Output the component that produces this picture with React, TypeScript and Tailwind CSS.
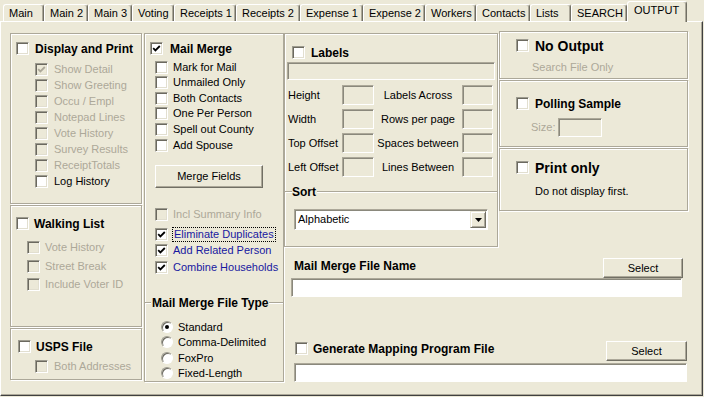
import type { ReactNode } from "react"

const tabs = [
  { label: "Main", w: "w-[41px]" },
  { label: "Main 2", w: "w-[44px]" },
  { label: "Main 3", w: "w-[44px]" },
  { label: "Voting", w: "w-[42px]" },
  { label: "Receipts 1", w: "w-[62px]" },
  { label: "Receipts 2", w: "w-[64px]" },
  { label: "Expense 1", w: "w-[63px]" },
  { label: "Expense 2", w: "w-[62px]" },
  { label: "Workers", w: "w-[51px]" },
  { label: "Contacts", w: "w-[54px]" },
  { label: "Lists", w: "w-[41px]" },
  { label: "SEARCH", w: "w-[56px]" },
]

function Box({ checked, disabled }: { checked?: boolean; disabled?: boolean }) {
  return (
    <span
      className={`flex h-[13px] w-[13px] shrink-0 items-center justify-center border border-t-[#9d9b8f] border-l-[#9d9b8f] border-r-white border-b-white shadow-[inset_1px_1px_0_#6b695f,inset_-1px_-1px_0_#e2dfd0] ${
        disabled ? "bg-[#ece9d8]" : "bg-white"
      }`}
    >
      {checked && (
        <svg width="9" height="9" viewBox="0 0 9 9">
          <path d="M1.2 4.2 L3.4 6.4 L7.8 2" fill="none" stroke={disabled ? "#aca899" : "#000"} strokeWidth="1.8" />
        </svg>
      )}
    </span>
  )
}

function Radio({ on }: { on?: boolean }) {
  return (
    <span className="flex h-[12px] w-[12px] shrink-0 items-center justify-center rounded-full border border-t-[#9d9b8f] border-l-[#9d9b8f] border-r-white border-b-white bg-white shadow-[inset_1px_1px_0_#6b695f]">
      {on && <span className="h-[4px] w-[4px] rounded-full bg-black" />}
    </span>
  )
}

function Field({ className, white }: { className: string; white?: boolean }) {
  return (
    <div
      className={`shrink-0 border border-t-[#aca899] border-l-[#aca899] border-r-white border-b-white shadow-[inset_1px_1px_0_#8a887c] ${
        white ? "bg-white" : "bg-[#ece9d8]"
      } ${className}`}
    />
  )
}

function Button({ children, className }: { children: ReactNode; className: string }) {
  return (
    <div
      className={`flex shrink-0 items-center justify-center border border-t-white border-l-white border-r-[#716f64] border-b-[#716f64] text-[11px] shadow-[inset_-1px_-1px_0_#aca899] ${className}`}
    >
      {children}
    </div>
  )
}

function Panel({ children, className }: { children?: ReactNode; className: string }) {
  return (
    <div className={`flex shrink-0 flex-col border border-[#aca899] shadow-[inset_1px_1px_0_#fff,1px_1px_0_#fff] ${className}`}>
      {children}
    </div>
  )
}

function Row({
  label,
  checked,
  disabled,
  className,
  gap = "ml-[6px]",
  blue,
}: {
  label: string
  checked?: boolean
  disabled?: boolean
  className: string
  gap?: string
  blue?: boolean
}) {
  return (
    <div className={`flex h-[13px] items-center ${className}`}>
      <Box checked={checked} disabled={disabled} />
      <span
        className={`${gap} whitespace-nowrap text-[11px] leading-[13px] ${
          disabled ? "text-[#aca899]" : blue ? "text-[#1818a0]" : "text-black"
        }`}
      >
        {label}
      </span>
    </div>
  )
}

function Etch({ className }: { className: string }) {
  return <div className={`h-[2px] border-t border-b border-t-[#aca899] border-b-white ${className}`} />
}

export default function App() {
  return (
    <div className="flex h-[397px] w-[704px] flex-col overflow-hidden bg-[#ece9d8] font-['Liberation_Sans',Arial,sans-serif] text-black">
      {/* tab strip */}
      <div className="flex h-[21px] shrink-0 items-end pl-[3px]">
        {tabs.map((t) => (
          <div
            key={t.label}
            className={`flex h-[17px] shrink-0 items-center rounded-t-[3px] border-t border-l border-r border-t-white border-l-white border-r-[#716f64] pl-[5px] text-[11px] leading-[13px] shadow-[inset_-1px_0_0_#aca899] ${t.w}`}
          >
            {t.label}
          </div>
        ))}
        <div className="relative top-[1px] z-10 flex h-[21px] w-[60px] shrink-0 items-center rounded-t-[3px] border-t border-l border-r border-t-white border-l-white border-r-[#716f64] bg-[#ece9d8] pb-[3px] pl-[6px] text-[11px] leading-[13px] shadow-[inset_-1px_0_0_#aca899]">
          OUTPUT
        </div>
      </div>

      {/* tab page */}
      <div className="flex h-[375px] w-[703px] shrink-0 items-start border border-t-white border-l-white border-r-[#404040] border-b-[#404040] pl-[9px] pt-[9px] shadow-[inset_-1px_-1px_0_#aca899]">
        {/* column 1 */}
        <div className="mt-[2px] flex w-[132px] shrink-0 flex-col">
          <Panel className="h-[171px]">
            <div className="ml-[5px] mt-[8px] flex h-[13px] items-center">
              <Box />
              <span className="ml-[6px] whitespace-nowrap text-[12px] font-bold leading-[14px]">Display and Print</span>
            </div>
            <Row label="Show Detail" checked disabled className="ml-[24px] mt-[8px]" />
            <Row label="Show Greeting" disabled className="ml-[24px] mt-[3px]" />
            <Row label="Occu / Empl" disabled className="ml-[24px] mt-[3px]" />
            <Row label="Notepad Lines" disabled className="ml-[24px] mt-[3px]" />
            <Row label="Vote History" disabled className="ml-[24px] mt-[3px]" />
            <Row label="Survey Results" disabled className="ml-[24px] mt-[3px]" />
            <Row label="ReceiptTotals" disabled className="ml-[24px] mt-[3px]" />
            <Row label="Log History" className="ml-[24px] mt-[3px]" />
          </Panel>
          <Panel className="mt-[1px] h-[122px]">
            <div className="ml-[5px] mt-[11px] flex h-[13px] items-center">
              <Box />
              <span className="ml-[5px] whitespace-nowrap text-[12px] font-bold leading-[14px]">Walking List</span>
            </div>
            <Row label="Vote History" disabled gap="ml-[5px]" className="ml-[16px] mt-[11px]" />
            <Row label="Street Break" disabled gap="ml-[5px]" className="ml-[16px] mt-[6px]" />
            <Row label="Include Voter ID" disabled gap="ml-[5px]" className="ml-[16px] mt-[5px]" />
          </Panel>
          <Panel className="mt-[1px] h-[52px]">
            <div className="ml-[7px] mt-[11px] flex h-[13px] items-center">
              <Box />
              <span className="ml-[5px] whitespace-nowrap text-[12px] font-bold leading-[14px]">USPS File</span>
            </div>
            <Row label="Both Addresses" disabled className="ml-[24px] mt-[7px]" />
          </Panel>
        </div>

        {/* column 2 */}
        <Panel className="ml-[2px] mt-[2px] h-[349px] w-[140px]">
          <div className="ml-[5px] mt-[8px] flex h-[13px] items-center">
            <Box checked />
            <span className="ml-[7px] whitespace-nowrap text-[12px] font-bold leading-[14px]">Mail Merge</span>
          </div>
          <Row label="Mark for Mail" gap="ml-[5px]" className="ml-[10px] mt-[6px]" />
          <Row label="Unmailed Only" gap="ml-[5px]" className="ml-[10px] mt-[2px]" />
          <Row label="Both Contacts" gap="ml-[5px]" className="ml-[10px] mt-[3px]" />
          <Row label="One Per Person" gap="ml-[5px]" className="ml-[10px] mt-[2px]" />
          <Row label="Spell out County" gap="ml-[5px]" className="ml-[10px] mt-[3px]" />
          <Row label="Add Spouse" gap="ml-[5px]" className="ml-[10px] mt-[3px]" />
          <Button className="ml-[10px] mt-[13px] h-[23px] w-[108px]">Merge Fields</Button>
          <Row label="Incl Summary Info" disabled gap="ml-[5px]" className="ml-[10px] mt-[20px]" />
          <div className="ml-[10px] mt-[7px] flex h-[13px] items-center">
            <Box checked />
            <span className="ml-[4px] whitespace-nowrap border border-dotted border-black px-[1px] text-[11px] leading-[13px] text-[#1818a0]">
              Eliminate Duplicates
            </span>
          </div>
          <Row label="Add Related Person" checked blue gap="ml-[5px]" className="ml-[10px] mt-[3px]" />
          <Row label="Combine Households" checked blue gap="ml-[5px]" className="ml-[10px] mt-[4px]" />
          <div className="mt-[22px] flex h-[14px] items-center">
            <Etch className="w-[6px]" />
            <span className="whitespace-nowrap px-[1px] text-[12px] font-bold leading-[14px]">Mail Merge File Type</span>
            <Etch className="flex-1" />
          </div>
          {[
            { label: "Standard", on: true, mt: "mt-[11px]" },
            { label: "Comma-Delimited", on: false, mt: "mt-[3px]" },
            { label: "FoxPro", on: false, mt: "mt-[4px]" },
            { label: "Fixed-Length", on: false, mt: "mt-[3px]" },
          ].map((r) => (
            <div key={r.label} className={`ml-[16px] flex h-[12px] items-center ${r.mt}`}>
              <Radio on={r.on} />
              <span className="ml-[5px] whitespace-nowrap text-[11px] leading-[13px]">{r.label}</span>
            </div>
          ))}
        </Panel>

        {/* right section */}
        <div className="flex shrink-0 flex-col">
          <div className="flex items-start">
            {/* labels / sort */}
            <Panel className="mt-[2px] h-[214px] w-[214px]">
              <div className="ml-[7px] mt-[12px] flex h-[13px] items-center">
                <Box />
                <span className="ml-[6px] whitespace-nowrap text-[12px] font-bold leading-[14px]">Labels</span>
              </div>
              <Field className="ml-[2px] mt-[3px] h-[18px] w-[208px]" />
              <div className="mt-[5px] flex flex-col gap-[4px]">
                {[
                  ["Height", "Labels Across"],
                  ["Width", "Rows per page"],
                  ["Top Offset", "Spaces between"],
                  ["Left Offset", "Lines Between"],
                ].map(([a, b]) => (
                  <div key={a} className="flex h-[20px] items-center">
                    <span className="ml-[3px] w-[54px] whitespace-nowrap text-[11px] leading-[13px]">{a}</span>
                    <Field className="h-[20px] w-[32px]" />
                    <span className="w-[88px] whitespace-nowrap text-center text-[11px] leading-[13px]">{b}</span>
                    <Field className="h-[20px] w-[31px]" />
                  </div>
                ))}
              </div>
              <div className="mt-[8px] flex h-[14px] items-center">
                <Etch className="w-[7px]" />
                <span className="pr-[1px] text-[12px] font-bold leading-[14px]">Sort</span>
                <Etch className="flex-1" />
              </div>
              <div className="ml-[9px] mt-[10px] flex h-[21px] w-[194px] items-center border border-t-[#aca899] border-l-[#aca899] border-r-white border-b-white bg-white p-[1px] shadow-[inset_1px_1px_0_#8a887c]">
                <span className="flex-1 pl-[2px] text-[11px] leading-[13px]">Alphabetic</span>
                <div className="flex h-[17px] w-[16px] items-center justify-center border border-t-[#ece9d8] border-l-[#ece9d8] border-r-[#716f64] border-b-[#716f64] bg-[#ece9d8] shadow-[inset_1px_1px_0_#fff,inset_-1px_-1px_0_#aca899]">
                  <svg width="7" height="4" viewBox="0 0 7 4">
                    <path d="M0 0 H7 L3.5 4 Z" fill="#000" />
                  </svg>
                </div>
              </div>
            </Panel>

            {/* output options */}
            <div className="ml-[1px] flex w-[189px] shrink-0 flex-col">
              <Panel className="h-[48px]">
                <div className="ml-[16px] mt-[7px] flex h-[13px] items-center">
                  <Box />
                  <span className="ml-[6px] whitespace-nowrap text-[14px] font-bold leading-[14px]">No Output</span>
                </div>
                <span className="ml-[32px] mt-[9px] text-[11px] leading-[13px] text-[#aca899]">Search File Only</span>
              </Panel>
              <Panel className="mt-[1px] h-[67px]">
                <div className="ml-[16px] mt-[16px] flex h-[13px] items-center">
                  <Box />
                  <span className="ml-[6px] whitespace-nowrap text-[12px] font-bold leading-[14px]">Polling Sample</span>
                </div>
                <div className="ml-[31px] mt-[8px] flex items-center">
                  <span className="text-[11px] leading-[13px] text-[#aca899]">Size:</span>
                  <Field className="ml-[3px] h-[19px] w-[44px]" />
                </div>
              </Panel>
              <Panel className="mt-[1px] h-[63px]">
                <div className="ml-[16px] mt-[12px] flex h-[13px] items-center">
                  <Box />
                  <span className="ml-[6px] whitespace-nowrap text-[14px] font-bold leading-[14px]">Print only</span>
                </div>
                <span className="ml-[35px] mt-[11px] text-[11px] leading-[13px]">Do not display first.</span>
              </Panel>
            </div>
          </div>

          {/* file names */}
          <div className="ml-[8px] mt-[11px] flex h-[20px] w-[391px] items-start justify-between">
            <span className="mt-[1px] pl-[2px] text-[12px] font-bold leading-[14px]">Mail Merge File Name</span>
            <Button className="h-[20px] w-[80px]">Select</Button>
          </div>
          <Field white className="ml-[7px] h-[19px] w-[391px]" />

          <div className="ml-[10px] mt-[44px] flex h-[20px] w-[393px] items-start justify-between">
            <div className="mt-[1px] flex h-[13px] items-center pl-[1px]">
              <Box />
              <span className="ml-[5px] whitespace-nowrap text-[12px] font-bold leading-[14px]">Generate Mapping Program File</span>
            </div>
            <Button className="h-[20px] w-[81px]">Select</Button>
          </div>
          <Field white className="ml-[10px] mt-[2px] h-[19px] w-[393px]" />
        </div>
      </div>
    </div>
  )
}
